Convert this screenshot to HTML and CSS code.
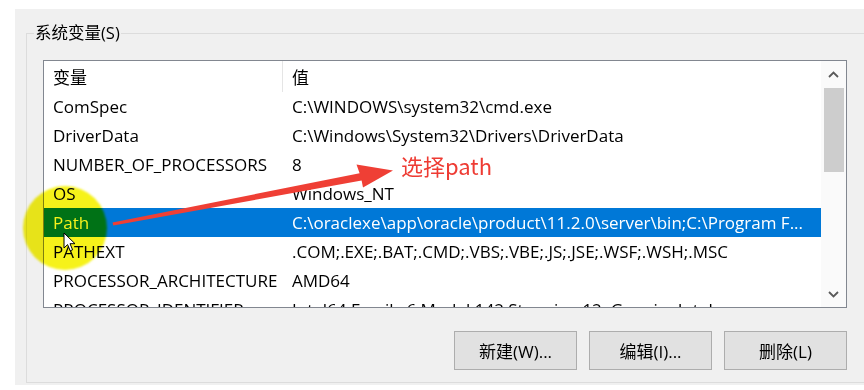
FILE: index.html
```html
<!DOCTYPE html>
<html lang="zh-CN">
<head>
  <meta charset="UTF-8" />
  <title>系统变量</title>
  <link rel="stylesheet" href="styles.css">
</head>
<body>

<div class="window">
  <fieldset class="group">
    <legend>系统变量(S)</legend>

    <div class="listbox">
      <div class="list">
        <div class="row head"><span class="c1">变量</span><span class="c2">值</span></div>
        <div class="row"><span class="c1">ComSpec</span><span class="c2">C:\WINDOWS\system32\cmd.exe</span></div>
        <div class="row"><span class="c1">DriverData</span><span class="c2">C:\Windows\System32\Drivers\DriverData</span></div>
        <div class="row"><span class="c1">NUMBER_OF_PROCESSORS</span><span class="c2">8</span></div>
        <div class="row"><span class="c1">OS</span><span class="c2">Windows_NT</span></div>
        <div class="row selected"><span class="c1">Path</span><span class="c2">C:\oraclexe\app\oracle\product\11.2.0\server\bin;C:\Program F...</span></div>
        <div class="row"><span class="c1">PATHEXT</span><span class="c2">.COM;.EXE;.BAT;.CMD;.VBS;.VBE;.JS;.JSE;.WSF;.WSH;.MSC</span></div>
        <div class="row"><span class="c1">PROCESSOR_ARCHITECTURE</span><span class="c2">AMD64</span></div>
        <div class="row"><span class="c1">PROCESSOR_IDENTIFIER</span><span class="c2">Intel64 Family 6 Model 142 Stepping 12, GenuineIntel</span></div>
      </div>
      <div class="scrollbar">
        <div class="sb-btn">
          <svg width="11" height="7" viewBox="0 0 11 7"><path d="M1 6 L5.5 1.5 L10 6" fill="none" stroke="#5a5a5a" stroke-width="1.8"/></svg>
        </div>
        <div class="thumb"></div>
        <div class="sb-btn down">
          <svg width="11" height="7" viewBox="0 0 11 7"><path d="M1 1 L5.5 5.5 L10 1" fill="none" stroke="#5a5a5a" stroke-width="1.8"/></svg>
        </div>
      </div>
    </div>

    <div class="buttons">
      <button>新建(W)...</button>
      <button>编辑(I)...</button>
      <button>删除(L)</button>
    </div>
  </fieldset>
</div>

<!-- annotation layer from the screen recording -->
<div class="annot">
  <div class="spot"></div>
  <svg class="arrow" width="864" height="390" viewBox="0 0 864 390">
    <polygon points="112.5,222.6 359.6,173.2 356.5,164.5 393,170.5 363,187.5 361.6,180.6 113.3,225.4" fill="#ef3f35"/>
  </svg>
  <div class="note">选择path</div>
  <svg class="cursor" width="14" height="21" viewBox="0 0 14 21">
    <path d="M1 1 L1 16 L4.6 12.6 L7.2 18.8 L9.6 17.8 L7 11.7 L12 11.7 Z" fill="#fff" stroke="#000" stroke-width="1"/>
  </svg>
</div>

</body>
</html>
```

FILE: styles.css
```css
body {
  margin: 0;
  background: #fff;
  font-family: "Open Sans", "Noto Sans CJK SC", sans-serif;
  font-size: 17px;
  color: #000;
  overflow: hidden;
}
.window {
  margin: 9px 0 0 15px;
  padding: 15px 0 2px 0;
  background: #f0f0f0;
  overflow: hidden;
}
.group {
  margin: 0 -40px 0 11px;
  padding: 0 0 12px 16px;
  border: 1px solid #dcdcdc;
}
.group legend {
  margin-left: -9px;
  padding: 0 1px;
  line-height: 18px;
  font-size: 16.5px;
}
.listbox {
  display: flex;
  box-sizing: border-box;
  width: 804px;
  height: 248px;
  margin-top: 18px;
  border: 1px solid #828790;
  background: #fff;
}
.list {
  flex: 1;
  overflow: hidden;
}
.row {
  display: flex;
  align-items: center;
  height: 29px;
  white-space: nowrap;
}
.row.head {
  height: 31px;
}
.c1 {
  box-sizing: border-box;
  width: 239px;
  flex: none;
  padding-left: 9px;
}
.head .c1 {
  align-self: stretch;
  display: flex;
  align-items: center;
  border-right: 1px solid #e5e5e5;
}
.c2 {
  flex: 1;
  overflow: hidden;
  padding-left: 9px;
}
.row.selected {
  background: #0078d7;
  color: #fff;
}
.scrollbar {
  width: 25px;
  flex: none;
  display: flex;
  flex-direction: column;
  align-items: center;
  background: #fafafa;
}
.sb-btn {
  height: 26px;
  width: 100%;
  display: flex;
  align-items: center;
  justify-content: center;
}
.sb-btn.down {
  margin-top: auto;
}
.thumb {
  width: 20px;
  height: 84px;
  margin-top: 1px;
  background: #cdcdcd;
}
.buttons {
  display: flex;
  justify-content: flex-end;
  gap: 12px;
  width: 804px;
  margin-top: 23px;
}
.buttons button {
  width: 123px;
  height: 39px;
  background: #e1e1e1;
  border: 1px solid #adadad;
  font-family: inherit;
  font-size: 17px;
  color: #000;
  padding: 0;
}
.annot {
  position: absolute;
  left: 0;
  top: 0;
  width: 864px;
  height: 390px;
  pointer-events: none;
}
.spot {
  position: absolute;
  left: 23px;
  top: 186px;
  width: 84px;
  height: 84px;
  border-radius: 50%;
  background: #f6f21a;
  mix-blend-mode: multiply;
  filter: blur(1px);
}
.arrow {
  position: absolute;
  left: 0;
  top: 0;
}
.note {
  position: absolute;
  left: 401px;
  top: 151px;
  font-size: 22px;
  line-height: 28px;
  color: #ee3b33;
  font-family: "Noto Sans CJK SC", sans-serif;
}
.cursor {
  position: absolute;
  left: 63px;
  top: 232px;
}
```
